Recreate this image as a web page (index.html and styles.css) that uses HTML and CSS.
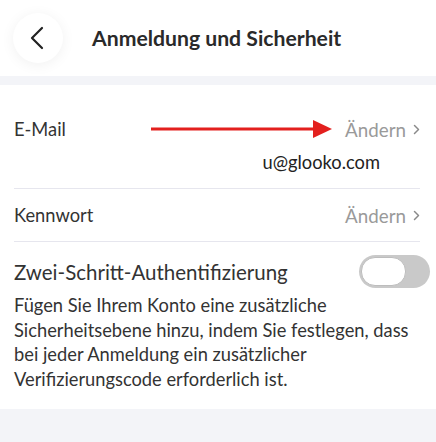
FILE: index.html
```html
<!DOCTYPE html>
<html>
<head>
    <title>Anmeldung und Sicherheit</title>
    <link rel="stylesheet" href="styles.css">
</head>
<body>
    <div class="header">
        <button class="back">
            <svg width="14" height="24" viewBox="0 0 14 24"><path d="M12 2 L2 12 L12 22" fill="none" stroke="#222" stroke-width="2.2" stroke-linecap="round" stroke-linejoin="round"/></svg>
        </button>
        <h1>Anmeldung und Sicherheit</h1>
    </div>
    <div class="band"></div>

    <div class="list">
        <div class="item email">
            <div class="row">
                <span class="label">E-Mail</span>
                <span class="arrow">
                    <svg width="182" height="20" viewBox="0 0 182 20"><rect x="0" y="8.5" width="165" height="3" fill="#e3201e"/><path d="M162 1 L181 10 L162 19 Z" fill="#e3201e"/></svg>
                </span>
                <span class="change">Ändern</span>
                <svg class="chev" width="7" height="11" viewBox="0 0 7 11"><path d="M1.5 1.5 L5.5 5.5 L1.5 9.5" fill="none" stroke="#8a8a8a" stroke-width="1.5" stroke-linecap="round" stroke-linejoin="round"/></svg>
            </div>
            <div class="value">u@glooko.com</div>
        </div>

        <div class="item password">
            <div class="row">
                <span class="label">Kennwort</span>
                <span class="change">Ändern</span>
                <svg class="chev" width="7" height="11" viewBox="0 0 7 11"><path d="M1.5 1.5 L5.5 5.5 L1.5 9.5" fill="none" stroke="#8a8a8a" stroke-width="1.5" stroke-linecap="round" stroke-linejoin="round"/></svg>
            </div>
        </div>

        <div class="item twofa">
            <div class="row">
                <span class="title">Zwei-Schritt-Authentifizierung</span>
                <span class="toggle"><span class="thumb"></span></span>
            </div>
            <p>Fügen Sie Ihrem Konto eine zusätzliche Sicherheitsebene hinzu, indem Sie festlegen, dass bei jeder Anmeldung ein zusätzlicher Verifizierungscode erforderlich ist.</p>
        </div>
    </div>
    <div class="bottom"></div>
</body>
</html>
```

FILE: styles.css
```css
html, body { margin: 0; height: 100%; }
body { font-family: Lato, "Noto Sans", sans-serif; color: #333; background: #fff; display: flex; flex-direction: column; }

.header { height: 76px; display: flex; align-items: center; }
.back { width: 50px; height: 50px; margin-left: 13px; border: none; border-radius: 50%; background: #fff; box-shadow: 0 2px 14px rgba(0,0,0,0.06); display: flex; align-items: center; justify-content: center; padding: 0 2px 0 0; }
h1 { margin: 0 0 0 29px; font-size: 21.2px; font-weight: 700; color: #2a2a2a; }
.band { height: 9px; background: #f3f4f8; }

.list { padding: 0 16px 0 14px; }
.item { border-bottom: 1px solid #e6e6ee; }
.item:last-child { border-bottom: none; }
.row { display: flex; align-items: center; font-size: 18.3px; }
.label { flex: 1; }
.change { color: #9a9a9a; font-size: 18.8px; }
.chev { margin-left: 7px; }

.email { padding: 29px 0 14px; }
.email .row { height: 30px; }
.arrow { display: flex; margin-right: 12px; }
.value { margin-top: 6px; line-height: 24px; font-size: 18.3px; text-align: right; padding-right: 40px; color: #222; }

.password .row { height: 52px; }

.twofa { padding: 13px 0 18px; }
.twofa .row { height: 33px; }
.title { flex: 1; font-size: 20.5px; }
.toggle { width: 71px; height: 33px; margin-right: -10px; border-radius: 17px; background: #c9c9c9; display: flex; align-items: center; padding-left: 2px; box-sizing: border-box; }
.thumb { width: 43px; height: 27px; border-radius: 14px; background: #fff; border: 1px solid #bdbdbd; }
.twofa p { margin: 5px 0 0; font-size: 18.3px; line-height: 24.5px; }

.bottom { flex: 1; background: #f3f4f8; }
```
